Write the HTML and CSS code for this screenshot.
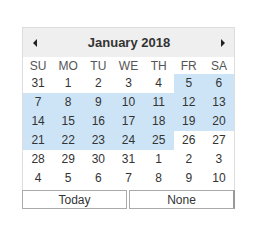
FILE: index.html
```html
<!DOCTYPE html>
<html lang="en">
<head>
<meta charset="UTF-8">
<title>Date picker</title>
<link rel="stylesheet" href="styles.css">
</head>
<body>

<div class="picker">
  <div class="calendar">
    <div class="head">
      <span class="arrow prev"></span>
      <span class="month">January 2018</span>
      <span class="arrow next"></span>
    </div>
    <div class="grid names">
      <span>SU</span><span>MO</span><span>TU</span><span>WE</span><span>TH</span><span>FR</span><span>SA</span>
    </div>
    <div class="grid days">
      <span>31</span><span>1</span><span>2</span><span>3</span><span>4</span><span class="sel">5</span><span class="sel">6</span>
      <span class="sel">7</span><span class="sel">8</span><span class="sel">9</span><span class="sel">10</span><span class="sel">11</span><span class="sel">12</span><span class="sel">13</span>
      <span class="sel">14</span><span class="sel">15</span><span class="sel">16</span><span class="sel">17</span><span class="sel">18</span><span class="sel">19</span><span class="sel">20</span>
      <span class="sel">21</span><span class="sel">22</span><span class="sel">23</span><span class="sel">24</span><span class="sel">25</span><span>26</span><span>27</span>
      <span>28</span><span>29</span><span>30</span><span>31</span><span>1</span><span>2</span><span>3</span>
      <span>4</span><span>5</span><span>6</span><span>7</span><span>8</span><span>9</span><span>10</span>
    </div>
  </div>
  <div class="buttons">
    <button>Today</button>
    <button class="last">None</button>
  </div>
</div>

</body>
</html>
```

FILE: styles.css
```css
body {
  margin: 0;
  padding: 27px 0 0 22px;
  background: #fff;
  font-family: "Liberation Sans", Arial, sans-serif;
  font-size: 12px;
  color: #333;
}
.picker { width: 213px; }
.calendar {
  border: 1px solid #ddd;
  border-bottom: none;
  padding-bottom: 2px;
}
.head {
  display: flex;
  align-items: center;
  justify-content: space-between;
  height: 29px;
  padding: 0 9px 0 10px;
  background: #efefef;
}
.month {
  font-weight: bold;
  font-size: 13px;
  color: #333;
}
.arrow {
  width: 0;
  height: 0;
  border-top: 4px solid transparent;
  border-bottom: 4px solid transparent;
}
.prev { border-right: 4px solid #222; }
.next { border-left: 4px solid #222; }
.grid {
  display: grid;
  grid-template-columns: repeat(7, 1fr);
  text-align: center;
}
.names span {
  height: 17px;
  line-height: 18px;
  color: #555;
}
.days span {
  height: 19px;
  line-height: 19px;
}
.days .sel { background: #cde4f7; }
.buttons {
  display: flex;
  gap: 2px;
}
.buttons button {
  flex: 1;
  height: 19px;
  padding: 0;
  border: 1px solid #aaa;
  background: #fff;
  font-family: "Liberation Sans", Arial, sans-serif;
  font-size: 12px;
  color: #333;
}
.buttons .last { border-right: 2px solid #999; }
```
